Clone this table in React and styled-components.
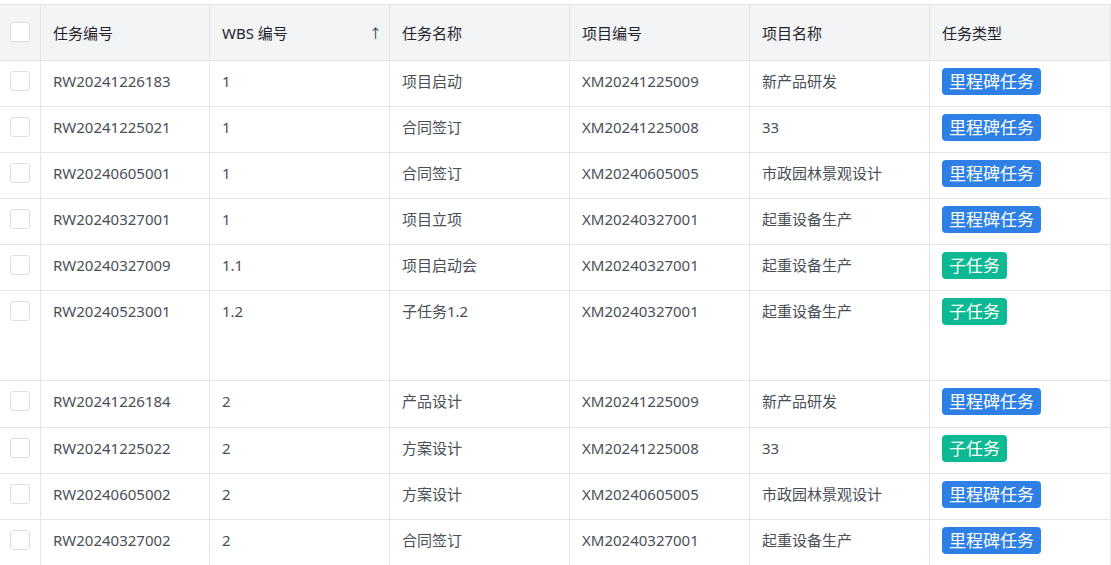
import React from 'react';
import styled, { createGlobalStyle } from 'styled-components';

const GlobalStyle = createGlobalStyle`
  html, body {
    margin: 0;
    padding: 0;
    background: #ffffff;
    font-family: "Noto Sans", "Noto Sans CJK SC", sans-serif;
    overflow: hidden;
  }
`;

const Wrapper = styled.div`
  padding-top: 4px;
  width: 1111px;
`;

const Table = styled.table`
  width: 1111px;
  table-layout: fixed;
  border-collapse: separate;
  border-spacing: 0;
  border-top: 1px solid #e3e5e8;
`;

const HeadCell = styled.th`
  height: 56px;
  padding: 0 12px;
  background: #f3f4f6;
  border-right: 1px solid #e3e5e8;
  border-bottom: 1px solid #e3e5e8;
  text-align: left;
  font-weight: 400;
  font-size: 15px;
  color: #1f2329;
  box-sizing: border-box;
  vertical-align: middle;
`;

const HeadInner = styled.div`
  display: flex;
  align-items: center;
  justify-content: space-between;
`;

const SortArrow = styled.span`
  font-size: 13px;
  color: #333;
  margin-right: -5px;
`;

const CheckCell = styled.td`
  padding: ${(p) => (p.$head ? '0' : '10px 0 0')};
  background: ${(p) => (p.$head ? '#f3f4f6' : '#fff')};
  border-right: 1px solid #e3e5e8;
  border-bottom: 1px solid #e3e5e8;
  vertical-align: ${(p) => (p.$head ? 'middle' : 'top')};
  text-align: center;
`;

const Box = styled.span`
  display: inline-block;
  width: 18px;
  height: 18px;
  border: 1px solid #dcdfe4;
  border-radius: 3px;
  background: #fff;
  vertical-align: top;
`;

const Cell = styled.td`
  height: ${(p) => p.$h}px;
  padding: 7px 12px 0;
  border-right: 1px solid #e3e5e8;
  border-bottom: 1px solid #e3e5e8;
  font-size: 15px;
  line-height: 27px;
  color: #4a4f57;
  vertical-align: top;
  box-sizing: border-box;
  white-space: nowrap;
  overflow: hidden;
`;

const Tag = styled.span`
  display: inline-flex;
  align-items: center;
  height: 27px;
  padding: 0 7px;
  border-radius: 4px;
  font-size: 17px;
  color: #fff;
  background: ${(p) => (p.$kind === 'sub' ? '#0db993' : '#2e7fe6')};
  vertical-align: top;
`;

const columns = [
  { key: 'code', title: '任务编号', width: 169 },
  { key: 'wbs', title: 'WBS 编号', width: 180, sort: true },
  { key: 'name', title: '任务名称', width: 180 },
  { key: 'pcode', title: '项目编号', width: 180 },
  { key: 'pname', title: '项目名称', width: 180 },
  { key: 'type', title: '任务类型', width: 181 },
];

const rows = [
  ['RW20241226183', '1', '项目启动', 'XM20241225009', '新产品研发', 'ms'],
  ['RW20241225021', '1', '合同签订', 'XM20241225008', '33', 'ms'],
  ['RW20240605001', '1', '合同签订', 'XM20240605005', '市政园林景观设计', 'ms'],
  ['RW20240327001', '1', '项目立项', 'XM20240327001', '起重设备生产', 'ms'],
  ['RW20240327009', '1.1', '项目启动会', 'XM20240327001', '起重设备生产', 'sub'],
  ['RW20240523001', '1.2', '子任务1.2', 'XM20240327001', '起重设备生产', 'sub', 90],
  ['RW20241226184', '2', '产品设计', 'XM20241225009', '新产品研发', 'ms', 47],
  ['RW20241225022', '2', '方案设计', 'XM20241225008', '33', 'sub'],
  ['RW20240605002', '2', '方案设计', 'XM20240605005', '市政园林景观设计', 'ms'],
  ['RW20240327002', '2', '合同签订', 'XM20240327001', '起重设备生产', 'ms'],
];

const typeLabel = { ms: '里程碑任务', sub: '子任务' };

export default function App() {
  return (
    <Wrapper>
      <GlobalStyle />
      <Table>
        <colgroup>
          <col style={{ width: 41 }} />
          {columns.map((c) => (
            <col key={c.key} style={{ width: c.width }} />
          ))}
        </colgroup>
        <thead>
          <tr>
            <CheckCell as="th" $head>
              <Box />
            </CheckCell>
            {columns.map((c) => (
              <HeadCell key={c.key}>
                <HeadInner>
                  <span>{c.title}</span>
                  {c.sort && <SortArrow>↑</SortArrow>}
                </HeadInner>
              </HeadCell>
            ))}
          </tr>
        </thead>
        <tbody>
          {rows.map((r) => {
            const h = r[6] || 46;
            return (
              <tr key={r[0]}>
                <CheckCell>
                  <Box />
                </CheckCell>
                <Cell $h={h}>{r[0]}</Cell>
                <Cell $h={h}>{r[1]}</Cell>
                <Cell $h={h}>{r[2]}</Cell>
                <Cell $h={h}>{r[3]}</Cell>
                <Cell $h={h}>{r[4]}</Cell>
                <Cell $h={h}>
                  <Tag $kind={r[5]}>{typeLabel[r[5]]}</Tag>
                </Cell>
              </tr>
            );
          })}
        </tbody>
      </Table>
    </Wrapper>
  );
}
